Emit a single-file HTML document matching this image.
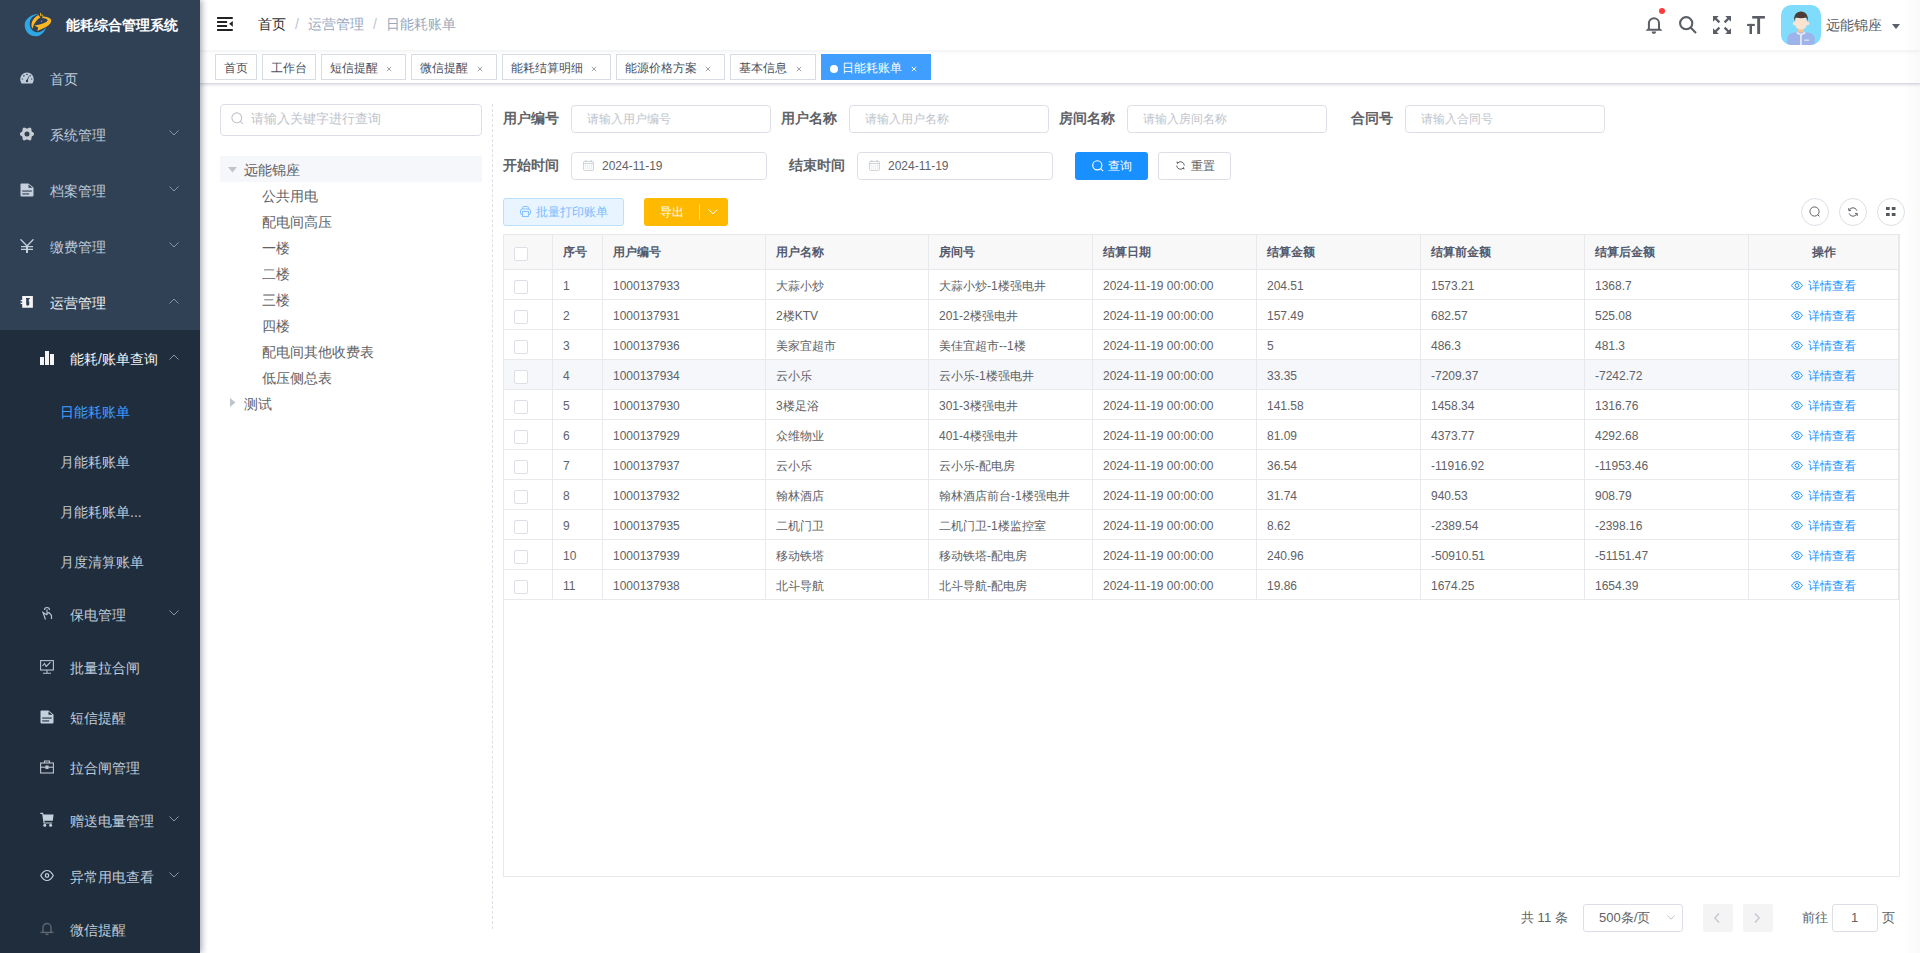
<!DOCTYPE html>
<html><head><meta charset="utf-8">
<style>
*{box-sizing:border-box;margin:0;padding:0}
html,body{width:1920px;height:953px;overflow:hidden}
body{font-family:"Liberation Sans",sans-serif;background:#fff;position:relative;color:#606266;font-size:14px}
.a{position:absolute;white-space:nowrap}
/* sidebar */
#side{left:0;top:0;width:200px;height:953px;background:#1f2d3d;z-index:5;box-shadow:2px 0 6px rgba(0,21,41,.35)}
#side .top{left:0;top:0;width:200px;height:330px;background:#304156}
.mi{color:#bfcbd9;font-size:14px;line-height:20px}
.ic{position:absolute}
.chev{position:absolute;width:7px;height:7px;border-right:1px solid #909399;border-bottom:1px solid #909399}
.chev.dn{transform:rotate(45deg)}
.chev.up{transform:rotate(-135deg)}
/* header */
#nav{left:200px;top:0;width:1720px;height:50px;background:#fff;box-shadow:0 1px 4px rgba(0,21,41,.08);z-index:3}
#tags{left:200px;top:50px;width:1720px;height:34px;background:#fff;border-bottom:1px solid #d8dce5;box-shadow:0 1px 3px 0 rgba(0,0,0,.12),0 0 3px 0 rgba(0,0,0,.04);z-index:2}
.tag{position:absolute;top:4px;height:26px;line-height:26px;border:1px solid #d8dce5;color:#495060;background:#fff;font-size:12px;padding-left:8px}
.tag .x{position:absolute;font-size:11px;color:#495060}
.tag.act{background:#409eff;border-color:#409eff;color:#fff}
/* inputs */
.inp{position:absolute;border:1px solid #dcdfe6;border-radius:4px;background:#fff}
.ph{position:absolute;color:#c0c4cc;font-size:12px;white-space:nowrap}
.lbl{position:absolute;font-weight:bold;color:#606266;font-size:14px;white-space:nowrap}
/* table */
.tb{position:absolute;left:503px;top:234px;width:1397px;height:643px;border:1px solid #e8e9ec;background:#fff}
.th{position:absolute;left:0;top:0;width:1395px;height:35px;background:#f8f8f9;border-bottom:1px solid #e8e9ec}
.vl{position:absolute;top:0;width:1px;height:365px;background:#e8e9ec}
.hl{position:absolute;left:0;width:1394px;height:1px;background:#e8e9ec}
.ht{position:absolute;top:0;line-height:35px;font-size:12px;font-weight:bold;color:#515a6e;white-space:nowrap}
.td{position:absolute;font-size:12px;color:#606266;white-space:nowrap;line-height:33px}
.cb{position:absolute;width:14px;height:14px;border:1px solid #dcdfe6;border-radius:2px;background:#fff}
.lk{color:#1890ff}
.circ{position:absolute;width:28px;height:28px;border:1px solid #dcdfe6;border-radius:50%;background:#fff}
.tr{font-size:14px;color:#606266;line-height:20px}
.dt{font-size:12px;color:#606266;line-height:18px}
.pg{font-size:13px;color:#606266;line-height:20px}
</style></head>
<body>

<!-- SIDEBAR -->
<div id="side" class="a">
  <div class="a top"></div>
  <!-- logo -->
  <svg class="ic" style="left:20px;top:8px" width="36" height="32" viewBox="0 0 36 32">
    <path d="M18.1 6 C11 6.5 4.7 11 4.7 17 C4.7 24 10 28.5 16.5 28.2 C21 28 24.5 24 26.2 19.5 C23 23 20 24.5 16.8 24.2 C12.5 23.8 9.5 20 9.7 15 C10 10.5 13.5 7.5 17.8 6.4 Z" fill="#2ea7e4"/>
    <path d="M12.4 20.8 C10 16 12.5 10 18.5 7 L20.3 9.5 C16.5 11.5 14 15.5 12.4 20.8 Z" fill="#fbb726"/>
    <path d="M22.5 8.5 C26 8.5 31 9.5 31.2 12.5 C31.3 15.5 28 18 25 19.5 L17.3 23 L18.2 19.5 L14.3 17.4 C18 17.3 23 16 26.5 13.8 C28 12.8 28 11.5 26 10.8 C24.5 10.3 23 10.2 22.3 10 Z" fill="#fbb726"/>
    <path d="M20 5.2 L21 4.8 L21.6 7.8 L20.3 8.2Z M22.2 6.8 L23 6.5 L23.4 8.6 L22.4 8.8Z" fill="#fbb726"/>
    <circle cx="21.5" cy="13.1" r="0.6" fill="#fbb726"/>
  </svg>
  <div class="a" style="left:66px;top:15px;color:#fff;font-weight:bold;font-size:14px;line-height:20px">能耗综合管理系统</div>

  <!-- 首页 -->
  <svg class="ic" style="left:20px;top:72px" width="14" height="12" viewBox="0 0 14 12"><path d="M7 0.5C3.2 0.5 0.3 3.5 0.3 7.3C0.3 8.9 0.8 10.3 1.6 11.5H12.4C13.2 10.3 13.7 8.9 13.7 7.3C13.7 3.5 10.8 0.5 7 0.5Z" fill="#bfcbd9"/><g fill="#304156"><rect x="6.2" y="1.8" width="1.6" height="1.2" rx=".5"/><rect x="3.2" y="3" width="1.4" height="1.5" rx=".5"/><rect x="9.4" y="3" width="1.4" height="1.5" rx=".5"/><rect x="1.6" y="6.5" width="1.6" height="1.1" rx=".5"/><rect x="10.8" y="6.5" width="1.6" height="1.1" rx=".5"/><circle cx="7" cy="9" r="1.2"/><path d="M6.5 8.8L8.6 4.2L9.1 4.4L7.5 9.2Z"/></g></svg>
  <div class="a mi" style="left:50px;top:69px">首页</div>

  <!-- 系统管理 -->
  <svg class="ic" style="left:20px;top:127px" width="14" height="14" viewBox="0 0 14 14"><path d="M14.15 7.00L14.01 7.61L13.62 8.17L13.09 8.63L12.52 9.01L12.04 9.35L11.72 9.72L11.56 10.19L11.50 10.78L11.45 11.45L11.32 12.15L11.04 12.76L10.58 13.19L9.97 13.38L9.30 13.32L8.63 13.09L8.02 12.79L7.48 12.54L7.00 12.45L6.52 12.54L5.98 12.79L5.37 13.09L4.70 13.32L4.03 13.38L3.43 13.19L2.96 12.76L2.68 12.15L2.55 11.45L2.50 10.78L2.44 10.19L2.28 9.73L1.96 9.35L1.48 9.01L0.91 8.63L0.38 8.17L-0.01 7.61L-0.15 7.00L-0.01 6.39L0.38 5.83L0.91 5.37L1.48 4.99L1.96 4.65L2.28 4.27L2.44 3.81L2.50 3.22L2.55 2.55L2.68 1.85L2.96 1.24L3.42 0.81L4.03 0.62L4.70 0.68L5.37 0.91L5.98 1.21L6.52 1.46L7.00 1.55L7.48 1.46L8.02 1.21L8.63 0.91L9.30 0.68L9.97 0.62L10.57 0.81L11.04 1.24L11.32 1.85L11.45 2.55L11.50 3.22L11.56 3.81L11.72 4.28L12.04 4.65L12.52 4.99L13.09 5.37L13.62 5.83L14.01 6.39Z M7 4.5A2.5 2.5 0 1 0 7 9.5A2.5 2.5 0 1 0 7 4.5Z" fill="#c7ccd3" fill-rule="evenodd"/></svg>
  <div class="a mi" style="left:50px;top:125px">系统管理</div>
  <svg class="ic" style="left:169px;top:130px" width="10" height="6" viewBox="0 0 10 6" fill="none" stroke="#8a94a3" stroke-width="1"><path d="M0.5 0.5L5 5L9.5 0.5"/></svg>

  <!-- 档案管理 -->
  <svg class="ic" style="left:20px;top:183px" width="14" height="14" viewBox="0 0 14 14"><path d="M1.5 0.5H8.5L13.5 4.5V12.5Q13.5 13.5 12.5 13.5H1.5Q0.5 13.5 0.5 12.5V1.5Q0.5 0.5 1.5 0.5Z" fill="#c5d0dd"/><path d="M8.5 1.5L12.5 4.8H8.5Z" fill="#304156"/><rect x="2.2" y="7.5" width="9.6" height="1.1" fill="#304156"/><rect x="2.2" y="10.4" width="7" height="1.1" fill="#304156"/></svg>
  <div class="a mi" style="left:50px;top:181px">档案管理</div>
  <svg class="ic" style="left:169px;top:186px" width="10" height="6" viewBox="0 0 10 6" fill="none" stroke="#8a94a3" stroke-width="1"><path d="M0.5 0.5L5 5L9.5 0.5"/></svg>

  <!-- 缴费管理 -->
  <svg class="ic" style="left:20px;top:239px" width="14" height="14" viewBox="0 0 14 14" fill="none" stroke="#c5d0dd" stroke-width="1.3"><path d="M0.5 0.3L7 7L13.5 0.3"/><path d="M7 7V14" stroke-width="2"/><path d="M1 7.6H13M1 10.4H13"/></svg>
  <div class="a mi" style="left:50px;top:237px">缴费管理</div>
  <svg class="ic" style="left:169px;top:242px" width="10" height="6" viewBox="0 0 10 6" fill="none" stroke="#8a94a3" stroke-width="1"><path d="M0.5 0.5L5 5L9.5 0.5"/></svg>

  <!-- 运营管理 -->
  <svg class="ic" style="left:20px;top:296px" width="13" height="12" viewBox="0 0 13 12"><path d="M2.2 0H12.9V11.8H2.2V8.1H0.2L1 7.45L0.2 6.8H2.2V5.3H0.2L1 4.65L0.2 4H2.2Z" fill="#f4f4f5"/><path d="M6 2H9.8V3L8.8 3.4V5.2L9.6 6.2L8.8 6.9L9.5 7.8C9.3 9 8.5 9.7 7.6 9.7C6.8 9.7 6.2 9 6.2 8V3.4L6 3Z" fill="#304156"/></svg>
  <div class="a mi" style="left:50px;top:293px;color:#f4f4f5">运营管理</div>
  <svg class="ic" style="left:169px;top:298px" width="10" height="6" viewBox="0 0 10 6" fill="none" stroke="#8a94a3" stroke-width="1"><path d="M0.5 5.5L5 1L9.5 5.5"/></svg>

  <!-- 能耗/账单查询 -->
  <svg class="ic" style="left:40px;top:351px" width="14" height="14" viewBox="0 0 14 14"><rect x="0" y="6" width="4" height="8" fill="#f4f4f5"/><rect x="5" y="0" width="4" height="14" fill="#f4f4f5"/><rect x="10" y="3" width="4" height="11" fill="#f4f4f5"/></svg>
  <div class="a mi" style="left:70px;top:349px;color:#f4f4f5">能耗/账单查询</div>
  <svg class="ic" style="left:169px;top:354px" width="10" height="6" viewBox="0 0 10 6" fill="none" stroke="#8a94a3" stroke-width="1"><path d="M0.5 5.5L5 1L9.5 5.5"/></svg>

  <div class="a mi" style="left:60px;top:402px;color:#409eff">日能耗账单</div>
  <div class="a mi" style="left:60px;top:452px">月能耗账单</div>
  <div class="a mi" style="left:60px;top:502px">月能耗账单...</div>
  <div class="a mi" style="left:60px;top:552px">月度清算账单</div>

  <!-- 保电管理 -->
  <svg class="ic" style="left:41px;top:606px" width="12" height="15" viewBox="0 0 12 15" fill="none" stroke="#b8c2cf" stroke-width="1.2"><path d="M3.5 4A2.5 2.5 0 0 1 8.5 4"/><path d="M6 3.5V9"/><path d="M6 7.5L8 6.5L10.5 9.5V13"/><path d="M6 9L2 6.5L4.5 13.5"/></svg>
  <div class="a mi" style="left:70px;top:605px">保电管理</div>
  <svg class="ic" style="left:169px;top:610px" width="10" height="6" viewBox="0 0 10 6" fill="none" stroke="#8a94a3" stroke-width="1"><path d="M0.5 0.5L5 5L9.5 0.5"/></svg>

  <!-- 批量拉合闸 -->
  <svg class="ic" style="left:40px;top:660px" width="14" height="14" viewBox="0 0 14 14" fill="none" stroke="#b8c2cf" stroke-width="1.1"><rect x="0.6" y="0.6" width="12.8" height="9.4"/><path d="M2.5 6L4.5 3.5L6.2 6.5L10.5 2.2"/><path d="M7 10V13M3 13.2H11"/></svg>
  <div class="a mi" style="left:70px;top:658px">批量拉合闸</div>

  <!-- 短信提醒 -->
  <svg class="ic" style="left:40px;top:710px" width="14" height="14" viewBox="0 0 14 14"><path d="M1.5 0.5H8.5L13.5 4.5V12.5Q13.5 13.5 12.5 13.5H1.5Q0.5 13.5 0.5 12.5V1.5Q0.5 0.5 1.5 0.5Z" fill="#c5d0dd"/><path d="M8.5 1.5L12.5 4.8H8.5Z" fill="#1f2d3d"/><rect x="2.2" y="7.5" width="9.6" height="1.1" fill="#1f2d3d"/><rect x="2.2" y="10.4" width="7" height="1.1" fill="#1f2d3d"/></svg>
  <div class="a mi" style="left:70px;top:708px">短信提醒</div>

  <!-- 拉合闸管理 -->
  <svg class="ic" style="left:40px;top:760px" width="14" height="14" viewBox="0 0 14 14" fill="none" stroke="#c0c4cc" stroke-width="1.1"><rect x="0.6" y="3" width="12.8" height="10"/><path d="M4.5 3V1H9.5V3"/><path d="M0.6 7.2H13.4"/><rect x="6" y="6" width="2" height="2.5" fill="#c0c4cc"/></svg>
  <div class="a mi" style="left:70px;top:758px">拉合闸管理</div>

  <!-- 赠送电量管理 -->
  <svg class="ic" style="left:40px;top:812px" width="14" height="15" viewBox="0 0 14 15"><path d="M0.3 0.8H3L3.6 2.6H13.6L12.8 8.8H4.4L4.6 10.4H12.2V11.5H3.6L2.2 2H0.3Z" fill="#c5d0dd"/><circle cx="4.8" cy="13.2" r="1.5" fill="#c5d0dd"/><circle cx="10.6" cy="13.2" r="1.5" fill="#c5d0dd"/></svg>
  <div class="a mi" style="left:70px;top:811px">赠送电量管理</div>
  <svg class="ic" style="left:169px;top:816px" width="10" height="6" viewBox="0 0 10 6" fill="none" stroke="#8a94a3" stroke-width="1"><path d="M0.5 0.5L5 5L9.5 0.5"/></svg>

  <!-- 异常用电查看 -->
  <svg class="ic" style="left:40px;top:869px" width="14" height="13" viewBox="0 0 14 13" fill="none" stroke="#c5d0dd" stroke-width="1.2"><path d="M0.7 6.5C2.5 3.2 4.5 1.5 7 1.5C9.5 1.5 11.5 3.2 13.3 6.5C11.5 9.8 9.5 11.5 7 11.5C4.5 11.5 2.5 9.8 0.7 6.5Z"/><rect x="5.4" y="4.9" width="3.2" height="3.2" rx="1"/></svg>
  <div class="a mi" style="left:70px;top:867px">异常用电查看</div>
  <svg class="ic" style="left:169px;top:872px" width="10" height="6" viewBox="0 0 10 6" fill="none" stroke="#8a94a3" stroke-width="1"><path d="M0.5 0.5L5 5L9.5 0.5"/></svg>

  <!-- 微信提醒 -->
  <svg class="ic" style="left:40px;top:922px" width="14" height="14" viewBox="0 0 14 14" fill="none" stroke="#5f6670" stroke-width="1.4"><path d="M3 10V5.5A4 4 0 0 1 11 5.5V10"/><path d="M0.5 10.4H13.5"/><path d="M5.5 12.3H8.5" stroke-width="1.6"/></svg>
  <div class="a mi" style="left:70px;top:920px">微信提醒</div>
</div>

<!-- NAVBAR -->
<div id="nav" class="a">
  <svg class="ic" style="left:17px;top:17px" width="16" height="14" viewBox="0 0 16 14" fill="#222"><rect x="0" y="0" width="15.8" height="1.9" rx=".5"/><rect x="0" y="4" width="10.1" height="1.9" rx=".5"/><rect x="0" y="8.1" width="10.1" height="1.8" rx=".5"/><rect x="0" y="12" width="15.8" height="1.9" rx=".5"/><path d="M15.8 3.9V9.8L12.1 6.85Z"/></svg>
  <div class="a" style="left:58px;top:14px;font-size:14px;line-height:20px;color:#303133">首页</div>
  <div class="a" style="left:95px;top:14px;font-size:14px;line-height:20px;color:#c0c4cc">/</div>
  <div class="a" style="left:108px;top:14px;font-size:14px;line-height:20px;color:#97a8be">运营管理</div>
  <div class="a" style="left:173px;top:14px;font-size:14px;line-height:20px;color:#c0c4cc">/</div>
  <div class="a" style="left:186px;top:14px;font-size:14px;line-height:20px;color:#97a8be">日能耗账单</div>

  <!-- bell -->
  <svg class="ic" style="left:1445px;top:16px" width="18" height="19" viewBox="0 0 18 19"><path d="M3.9 13V7.2A5.05 5.05 0 0 1 14 7.2V13" fill="none" stroke="#5a5e66" stroke-width="2"/><path d="M2.4 12.7H15.6L17.4 14.7H0.6Z" fill="#5a5e66"/><path d="M6.6 15.6H11.2A2.3 2.3 0 0 1 6.6 15.6Z" fill="#5a5e66"/></svg>
  <div class="a" style="left:1459px;top:8px;width:6px;height:6px;border-radius:50%;background:#ff3b3b"></div>
  <!-- search -->
  <svg class="ic" style="left:1479px;top:16px" width="18" height="18" viewBox="0 0 18 18" fill="none" stroke="#5a5e66" stroke-width="2.1"><circle cx="7.2" cy="7.2" r="6.1"/><path d="M11.6 11.6L17 17"/></svg>
  <!-- fullscreen -->
  <svg class="ic" style="left:1513px;top:16px" width="18" height="18" viewBox="0 0 18 18" fill="#5a5e66" stroke="#5a5e66"><path d="M0 0H5.8L0 5.8Z M18 0V5.8L12.2 0Z M0 18V12.2L5.8 18Z M18 18H12.2L18 12.2Z" stroke="none"/><path d="M2 2L6.4 6.4M16 2L11.6 6.4M2 16L6.4 11.6M16 16L11.6 11.6" stroke-width="2.3" fill="none"/></svg>
  <!-- size -->
  <svg class="ic" style="left:1547px;top:16px" width="18" height="18" viewBox="0 0 18 18" fill="#5a5e66"><rect x="5.2" y="0" width="12.7" height="2.6"/><rect x="10.2" y="0" width="2.9" height="18"/><rect x="0.1" y="7.9" width="7.7" height="2.1"/><rect x="2.5" y="7.9" width="2.5" height="10.1"/></svg>
  <!-- avatar -->
  <div class="a" style="left:1581px;top:5px;width:40px;height:40px;border-radius:10px;background:#7fdcfc;overflow:hidden">
    <svg width="40" height="40" viewBox="0 0 40 40"><path d="M6.3 40V33.5C6.3 30.5 8.5 28.6 12 27.8L17 26.8H23L28 27.8C31.5 28.6 33.7 30.5 33.7 33.5V40Z" fill="#9db4ea"/><rect x="17" y="22.5" width="6" height="5" fill="#f5c29c"/><path d="M15.8 26.8L20 28.8L24.2 26.8L24.6 28.6L20 30.4L15.4 28.6Z" fill="#e3e9f7"/><rect x="19" y="28.8" width="1.8" height="11.2" fill="#e3e9f7"/><rect x="23.2" y="34.6" width="4.9" height="1.2" fill="#e3e9f7"/><ellipse cx="13.2" cy="18.4" rx="1.4" ry="1.9" fill="#fbe3d2"/><ellipse cx="26.8" cy="18.4" rx="1.4" ry="1.9" fill="#fbe3d2"/><ellipse cx="20" cy="18" rx="6.2" ry="6.6" fill="#fbe3d2"/><path d="M13.1 16.5C12.6 10 15.5 6.6 20 6.6C24.5 6.6 27.4 10 26.9 16.5C26.5 14.5 25.9 13.2 24.8 12.6C22 13.3 18 13.3 15.2 12.6C14.1 13.2 13.5 14.5 13.1 16.5Z" fill="#4a3c36"/></svg>
  </div>
  <div class="a" style="left:1626px;top:15px;font-size:14px;line-height:20px;color:#5a5e66">远能锦座</div>
  <svg class="ic" style="left:1692px;top:24px" width="8" height="5" viewBox="0 0 8 5"><path d="M0 0H8L4 5Z" fill="#5a5e66"/></svg>
</div>

<!-- TAGS -->
<div id="tags" class="a">
  <div class="tag" style="left:15px;width:42px">首页</div>
  <div class="tag" style="left:62px;width:54px">工作台</div>
  <div class="tag" style="left:121px;width:85px">短信提醒<svg class="ic" style="left:64px;top:11px" width="6" height="6" viewBox="0 0 6 6" fill="none" stroke="#9da1a8" stroke-width="1"><path d="M0.8 0.8L5.2 5.2M5.2 0.8L0.8 5.2"/></svg></div>
  <div class="tag" style="left:211px;width:86px">微信提醒<svg class="ic" style="left:65px;top:11px" width="6" height="6" viewBox="0 0 6 6" fill="none" stroke="#9da1a8" stroke-width="1"><path d="M0.8 0.8L5.2 5.2M5.2 0.8L0.8 5.2"/></svg></div>
  <div class="tag" style="left:302px;width:109px">能耗结算明细<svg class="ic" style="left:88px;top:11px" width="6" height="6" viewBox="0 0 6 6" fill="none" stroke="#9da1a8" stroke-width="1"><path d="M0.8 0.8L5.2 5.2M5.2 0.8L0.8 5.2"/></svg></div>
  <div class="tag" style="left:416px;width:109px">能源价格方案<svg class="ic" style="left:88px;top:11px" width="6" height="6" viewBox="0 0 6 6" fill="none" stroke="#9da1a8" stroke-width="1"><path d="M0.8 0.8L5.2 5.2M5.2 0.8L0.8 5.2"/></svg></div>
  <div class="tag" style="left:530px;width:86px">基本信息<svg class="ic" style="left:65px;top:11px" width="6" height="6" viewBox="0 0 6 6" fill="none" stroke="#9da1a8" stroke-width="1"><path d="M0.8 0.8L5.2 5.2M5.2 0.8L0.8 5.2"/></svg></div>
  <div class="tag act" style="left:621px;width:110px"><span style="display:inline-block;width:8px;height:8px;border-radius:50%;background:#fff;margin-right:4px;vertical-align:-1px"></span>日能耗账单<svg class="ic" style="left:89px;top:11px" width="6" height="6" viewBox="0 0 6 6" fill="none" stroke="#fff" stroke-width="1"><path d="M0.8 0.8L5.2 5.2M5.2 0.8L0.8 5.2"/></svg></div>
</div>

<!-- CONTENT -->
<div id="content">
<!-- tree search -->
<div class="inp" style="left:220px;top:104px;width:262px;height:32px"></div>
<svg class="ic" style="left:231px;top:112px" width="13" height="13" viewBox="0 0 13 13" fill="none" stroke="#c0c4cc" stroke-width="1.1"><circle cx="5.8" cy="5.8" r="4.9"/><path d="M9.3 9.3L11.8 11.8"/></svg>
<div class="ph" style="left:251px;top:110px;font-size:13px;line-height:18px">请输入关键字进行查询</div>
<!-- tree -->
<div class="a" style="left:220px;top:156px;width:262px;height:26px;background:#f5f7fa"></div>
<svg class="ic" style="left:228px;top:167px" width="9" height="6" viewBox="0 0 9 6"><path d="M0 0H9L4.5 5.5Z" fill="#c0c4cc"/></svg>
<div class="a tr" style="left:244px;top:160px">远能锦座</div>
<div class="a tr" style="left:262px;top:186px">公共用电</div>
<div class="a tr" style="left:262px;top:212px">配电间高压</div>
<div class="a tr" style="left:262px;top:238px">一楼</div>
<div class="a tr" style="left:262px;top:264px">二楼</div>
<div class="a tr" style="left:262px;top:290px">三楼</div>
<div class="a tr" style="left:262px;top:316px">四楼</div>
<div class="a tr" style="left:262px;top:342px">配电间其他收费表</div>
<div class="a tr" style="left:262px;top:368px">低压侧总表</div>
<svg class="ic" style="left:230px;top:398px" width="6" height="9" viewBox="0 0 6 9"><path d="M0 0V9L5.5 4.5Z" fill="#c0c4cc"/></svg>
<div class="a tr" style="left:244px;top:394px">测试</div>
<!-- dashed divider -->
<div class="a" style="left:492px;top:104px;width:0;height:825px;border-left:1px dashed #dcdfe6"></div>

<!-- form row 1 -->
<div class="lbl" style="left:503px;top:110px">用户编号</div>
<div class="inp" style="left:571px;top:105px;width:200px;height:28px"></div>
<div class="ph" style="left:587px;top:111px">请输入用户编号</div>
<div class="lbl" style="left:781px;top:110px">用户名称</div>
<div class="inp" style="left:849px;top:105px;width:200px;height:28px"></div>
<div class="ph" style="left:865px;top:111px">请输入用户名称</div>
<div class="lbl" style="left:1059px;top:110px">房间名称</div>
<div class="inp" style="left:1127px;top:105px;width:200px;height:28px"></div>
<div class="ph" style="left:1143px;top:111px">请输入房间名称</div>
<div class="lbl" style="left:1351px;top:110px">合同号</div>
<div class="inp" style="left:1405px;top:105px;width:200px;height:28px"></div>
<div class="ph" style="left:1421px;top:111px">请输入合同号</div>

<!-- form row 2 -->
<div class="lbl" style="left:503px;top:157px">开始时间</div>
<div class="inp" style="left:571px;top:152px;width:196px;height:28px"></div>
<svg class="ic" style="left:583px;top:160px" width="11" height="11" viewBox="0 0 11 11"><g fill="none" stroke="#c0c4cc" stroke-width="0.8"><rect x="0.6" y="1.4" width="9.8" height="9" rx="0.8"/><path d="M0.6 3.6H10.4M2.8 0V2.2M8.2 0V2.2"/></g><g fill="#d5d8de"><rect x="2.3" y="5.4" width="1" height="1"/><rect x="4.2" y="5.4" width="1" height="1"/><rect x="6.1" y="5.4" width="1" height="1"/><rect x="8.0" y="5.4" width="1" height="1"/><rect x="2.3" y="7.6" width="1" height="1"/><rect x="4.2" y="7.6" width="1" height="1"/><rect x="6.1" y="7.6" width="1" height="1"/><rect x="8.0" y="7.6" width="1" height="1"/></g></svg>
<div class="a dt" style="left:602px;top:157px">2024-11-19</div>
<div class="lbl" style="left:789px;top:157px">结束时间</div>
<div class="inp" style="left:857px;top:152px;width:196px;height:28px"></div>
<svg class="ic" style="left:869px;top:160px" width="11" height="11" viewBox="0 0 11 11"><g fill="none" stroke="#c0c4cc" stroke-width="0.8"><rect x="0.6" y="1.4" width="9.8" height="9" rx="0.8"/><path d="M0.6 3.6H10.4M2.8 0V2.2M8.2 0V2.2"/></g><g fill="#d5d8de"><rect x="2.3" y="5.4" width="1" height="1"/><rect x="4.2" y="5.4" width="1" height="1"/><rect x="6.1" y="5.4" width="1" height="1"/><rect x="8.0" y="5.4" width="1" height="1"/><rect x="2.3" y="7.6" width="1" height="1"/><rect x="4.2" y="7.6" width="1" height="1"/><rect x="6.1" y="7.6" width="1" height="1"/><rect x="8.0" y="7.6" width="1" height="1"/></g></svg>
<div class="a dt" style="left:888px;top:157px">2024-11-19</div>
<!-- query -->
<div class="a" style="left:1075px;top:152px;width:73px;height:28px;background:#1890ff;border-radius:3px"></div>
<svg class="ic" style="left:1092px;top:160px" width="12" height="12" viewBox="0 0 12 12" fill="none" stroke="#fff" stroke-width="1.1"><circle cx="5.3" cy="5.3" r="4.6"/><path d="M8.6 8.6L11.2 11.2"/></svg>
<div class="a" style="left:1108px;top:157px;color:#fff;font-size:12px;line-height:18px">查询</div>
<!-- reset -->
<div class="inp" style="left:1158px;top:152px;width:73px;height:28px;border-radius:3px"></div>
<svg class="ic" style="left:1176px;top:161px" width="9" height="9" viewBox="0 0 9 9" fill="none" stroke="#606266" stroke-width="1"><path d="M8.3 4.5A3.8 3.8 0 0 0 2 1.7"/><path d="M0.7 4.5A3.8 3.8 0 0 0 7 7.3"/><path d="M0.4 0.6L3 1.2L1.2 3.2Z" fill="#606266" stroke="none"/><path d="M8.6 8.4L6 7.8L7.8 5.8Z" fill="#606266" stroke="none"/></svg>
<div class="a" style="left:1191px;top:157px;color:#606266;font-size:12px;line-height:18px">重置</div>

<!-- row 3 -->
<div class="a" style="left:503px;top:198px;width:121px;height:28px;background:#e8f4ff;border:1px solid #bae0ff;border-radius:3px"></div>
<svg class="ic" style="left:520px;top:206px" width="11" height="11" viewBox="0 0 11 11" fill="none" stroke="#79bbff" stroke-width="0.9"><path d="M2.6 3V1.5Q2.6 0.5 3.6 0.5H7.4Q8.4 0.5 8.4 1.5V3"/><path d="M2.4 8.5H1.8Q0.5 8.5 0.5 7V5Q0.5 3 2.5 3H8.5Q10.5 3 10.5 5V7Q10.5 8.5 9.2 8.5H8.6"/><rect x="2.6" y="5.5" width="5.8" height="5"/></svg>
<div class="a" style="left:536px;top:203px;color:#79bbff;font-size:12px;line-height:18px">批量打印账单</div>
<div class="a" style="left:644px;top:198px;width:84px;height:28px;background:#ffba00;border-radius:3px"></div>
<div class="a" style="left:699px;top:204px;width:1px;height:16px;background:rgba(255,255,255,.5)"></div>
<div class="a" style="left:660px;top:203px;color:#fff;font-size:12px;line-height:18px">导出</div>
<svg class="ic" style="left:708px;top:209px" width="10" height="6" viewBox="0 0 10 6" fill="none" stroke="#fff" stroke-width="1"><path d="M0.5 0.5L5 4.8L9.5 0.5"/></svg>
<!-- right toolbar -->
<div class="circ" style="left:1801px;top:198px"></div>
<svg class="ic" style="left:1809px;top:206px" width="12" height="12" viewBox="0 0 12 12" fill="none" stroke="#606266" stroke-width="1"><circle cx="5.5" cy="5.5" r="4.6"/><path d="M8.7 8.7L10.4 10.4"/></svg>
<div class="circ" style="left:1839px;top:198px"></div>
<svg class="ic" style="left:1848px;top:207px" width="10" height="10" viewBox="0 0 10 10" fill="none" stroke="#606266" stroke-width="1"><path d="M8.8 3.6A4 4 0 0 0 1.2 3.4"/><path d="M1.2 6.4A4 4 0 0 0 8.8 6.6"/><path d="M0.8 1V3.6H3" /><path d="M9.2 9V6.4H7"/></svg>
<div class="circ" style="left:1877px;top:198px"></div>
<svg class="ic" style="left:1886px;top:207px" width="10" height="9" viewBox="0 0 10 9" fill="#55585e"><rect x="0" y="0" width="3.7" height="3"/><rect x="5.8" y="0" width="3.7" height="3"/><rect x="0" y="6" width="3.7" height="3"/><rect x="5.8" y="6" width="3.7" height="3"/></svg>
<div class="tb">
<div class="th"></div>
<div class="a" style="left:0;top:125px;width:1395px;height:30px;background:#f5f7fa"></div>
<div class="vl" style="left:48px"></div>
<div class="vl" style="left:98px"></div>
<div class="vl" style="left:261px"></div>
<div class="vl" style="left:424px"></div>
<div class="vl" style="left:588px"></div>
<div class="vl" style="left:752px"></div>
<div class="vl" style="left:916px"></div>
<div class="vl" style="left:1080px"></div>
<div class="vl" style="left:1244px"></div>
<div class="vl" style="left:1394px"></div>
<div class="hl" style="top:64px"></div>
<div class="hl" style="top:94px"></div>
<div class="hl" style="top:124px"></div>
<div class="hl" style="top:154px"></div>
<div class="hl" style="top:184px"></div>
<div class="hl" style="top:214px"></div>
<div class="hl" style="top:244px"></div>
<div class="hl" style="top:274px"></div>
<div class="hl" style="top:304px"></div>
<div class="hl" style="top:334px"></div>
<div class="hl" style="top:364px"></div>
<div class="ht" style="left:59px">序号</div>
<div class="ht" style="left:109px">用户编号</div>
<div class="ht" style="left:272px">用户名称</div>
<div class="ht" style="left:435px">房间号</div>
<div class="ht" style="left:599px">结算日期</div>
<div class="ht" style="left:763px">结算金额</div>
<div class="ht" style="left:927px">结算前金额</div>
<div class="ht" style="left:1091px">结算后金额</div>
<div class="ht" style="left:1245px;width:150px;text-align:center">操作</div>
<div class="cb" style="left:10px;top:12px"></div>
<div class="cb" style="left:10px;top:45px"></div>
<div class="td" style="left:59px;top:35px">1</div>
<div class="td" style="left:109px;top:35px">1000137933</div>
<div class="td" style="left:272px;top:35px">大蒜小炒</div>
<div class="td" style="left:435px;top:35px">大蒜小炒-1楼强电井</div>
<div class="td" style="left:599px;top:35px">2024-11-19 00:00:00</div>
<div class="td" style="left:763px;top:35px">204.51</div>
<div class="td" style="left:927px;top:35px">1573.21</div>
<div class="td" style="left:1091px;top:35px">1368.7</div>
<div class="td lk" style="left:1287px;top:35px"><svg width="12" height="9" viewBox="0 0 12 9" fill="none" stroke="#1890ff" stroke-width="1" style="vertical-align:0px;margin-right:5px"><path d="M0.6 4.5C2 2 3.8 0.7 6 0.7C8.2 0.7 10 2 11.4 4.5C10 7 8.2 8.3 6 8.3C3.8 8.3 2 7 0.6 4.5Z"/><circle cx="6" cy="4.5" r="1.9"/></svg>详情查看</div>
<div class="cb" style="left:10px;top:75px"></div>
<div class="td" style="left:59px;top:65px">2</div>
<div class="td" style="left:109px;top:65px">1000137931</div>
<div class="td" style="left:272px;top:65px">2楼KTV</div>
<div class="td" style="left:435px;top:65px">201-2楼强电井</div>
<div class="td" style="left:599px;top:65px">2024-11-19 00:00:00</div>
<div class="td" style="left:763px;top:65px">157.49</div>
<div class="td" style="left:927px;top:65px">682.57</div>
<div class="td" style="left:1091px;top:65px">525.08</div>
<div class="td lk" style="left:1287px;top:65px"><svg width="12" height="9" viewBox="0 0 12 9" fill="none" stroke="#1890ff" stroke-width="1" style="vertical-align:0px;margin-right:5px"><path d="M0.6 4.5C2 2 3.8 0.7 6 0.7C8.2 0.7 10 2 11.4 4.5C10 7 8.2 8.3 6 8.3C3.8 8.3 2 7 0.6 4.5Z"/><circle cx="6" cy="4.5" r="1.9"/></svg>详情查看</div>
<div class="cb" style="left:10px;top:105px"></div>
<div class="td" style="left:59px;top:95px">3</div>
<div class="td" style="left:109px;top:95px">1000137936</div>
<div class="td" style="left:272px;top:95px">美家宜超市</div>
<div class="td" style="left:435px;top:95px">美佳宜超市--1楼</div>
<div class="td" style="left:599px;top:95px">2024-11-19 00:00:00</div>
<div class="td" style="left:763px;top:95px">5</div>
<div class="td" style="left:927px;top:95px">486.3</div>
<div class="td" style="left:1091px;top:95px">481.3</div>
<div class="td lk" style="left:1287px;top:95px"><svg width="12" height="9" viewBox="0 0 12 9" fill="none" stroke="#1890ff" stroke-width="1" style="vertical-align:0px;margin-right:5px"><path d="M0.6 4.5C2 2 3.8 0.7 6 0.7C8.2 0.7 10 2 11.4 4.5C10 7 8.2 8.3 6 8.3C3.8 8.3 2 7 0.6 4.5Z"/><circle cx="6" cy="4.5" r="1.9"/></svg>详情查看</div>
<div class="cb" style="left:10px;top:135px"></div>
<div class="td" style="left:59px;top:125px">4</div>
<div class="td" style="left:109px;top:125px">1000137934</div>
<div class="td" style="left:272px;top:125px">云小乐</div>
<div class="td" style="left:435px;top:125px">云小乐-1楼强电井</div>
<div class="td" style="left:599px;top:125px">2024-11-19 00:00:00</div>
<div class="td" style="left:763px;top:125px">33.35</div>
<div class="td" style="left:927px;top:125px">-7209.37</div>
<div class="td" style="left:1091px;top:125px">-7242.72</div>
<div class="td lk" style="left:1287px;top:125px"><svg width="12" height="9" viewBox="0 0 12 9" fill="none" stroke="#1890ff" stroke-width="1" style="vertical-align:0px;margin-right:5px"><path d="M0.6 4.5C2 2 3.8 0.7 6 0.7C8.2 0.7 10 2 11.4 4.5C10 7 8.2 8.3 6 8.3C3.8 8.3 2 7 0.6 4.5Z"/><circle cx="6" cy="4.5" r="1.9"/></svg>详情查看</div>
<div class="cb" style="left:10px;top:165px"></div>
<div class="td" style="left:59px;top:155px">5</div>
<div class="td" style="left:109px;top:155px">1000137930</div>
<div class="td" style="left:272px;top:155px">3楼足浴</div>
<div class="td" style="left:435px;top:155px">301-3楼强电井</div>
<div class="td" style="left:599px;top:155px">2024-11-19 00:00:00</div>
<div class="td" style="left:763px;top:155px">141.58</div>
<div class="td" style="left:927px;top:155px">1458.34</div>
<div class="td" style="left:1091px;top:155px">1316.76</div>
<div class="td lk" style="left:1287px;top:155px"><svg width="12" height="9" viewBox="0 0 12 9" fill="none" stroke="#1890ff" stroke-width="1" style="vertical-align:0px;margin-right:5px"><path d="M0.6 4.5C2 2 3.8 0.7 6 0.7C8.2 0.7 10 2 11.4 4.5C10 7 8.2 8.3 6 8.3C3.8 8.3 2 7 0.6 4.5Z"/><circle cx="6" cy="4.5" r="1.9"/></svg>详情查看</div>
<div class="cb" style="left:10px;top:195px"></div>
<div class="td" style="left:59px;top:185px">6</div>
<div class="td" style="left:109px;top:185px">1000137929</div>
<div class="td" style="left:272px;top:185px">众维物业</div>
<div class="td" style="left:435px;top:185px">401-4楼强电井</div>
<div class="td" style="left:599px;top:185px">2024-11-19 00:00:00</div>
<div class="td" style="left:763px;top:185px">81.09</div>
<div class="td" style="left:927px;top:185px">4373.77</div>
<div class="td" style="left:1091px;top:185px">4292.68</div>
<div class="td lk" style="left:1287px;top:185px"><svg width="12" height="9" viewBox="0 0 12 9" fill="none" stroke="#1890ff" stroke-width="1" style="vertical-align:0px;margin-right:5px"><path d="M0.6 4.5C2 2 3.8 0.7 6 0.7C8.2 0.7 10 2 11.4 4.5C10 7 8.2 8.3 6 8.3C3.8 8.3 2 7 0.6 4.5Z"/><circle cx="6" cy="4.5" r="1.9"/></svg>详情查看</div>
<div class="cb" style="left:10px;top:225px"></div>
<div class="td" style="left:59px;top:215px">7</div>
<div class="td" style="left:109px;top:215px">1000137937</div>
<div class="td" style="left:272px;top:215px">云小乐</div>
<div class="td" style="left:435px;top:215px">云小乐-配电房</div>
<div class="td" style="left:599px;top:215px">2024-11-19 00:00:00</div>
<div class="td" style="left:763px;top:215px">36.54</div>
<div class="td" style="left:927px;top:215px">-11916.92</div>
<div class="td" style="left:1091px;top:215px">-11953.46</div>
<div class="td lk" style="left:1287px;top:215px"><svg width="12" height="9" viewBox="0 0 12 9" fill="none" stroke="#1890ff" stroke-width="1" style="vertical-align:0px;margin-right:5px"><path d="M0.6 4.5C2 2 3.8 0.7 6 0.7C8.2 0.7 10 2 11.4 4.5C10 7 8.2 8.3 6 8.3C3.8 8.3 2 7 0.6 4.5Z"/><circle cx="6" cy="4.5" r="1.9"/></svg>详情查看</div>
<div class="cb" style="left:10px;top:255px"></div>
<div class="td" style="left:59px;top:245px">8</div>
<div class="td" style="left:109px;top:245px">1000137932</div>
<div class="td" style="left:272px;top:245px">翰林酒店</div>
<div class="td" style="left:435px;top:245px">翰林酒店前台-1楼强电井</div>
<div class="td" style="left:599px;top:245px">2024-11-19 00:00:00</div>
<div class="td" style="left:763px;top:245px">31.74</div>
<div class="td" style="left:927px;top:245px">940.53</div>
<div class="td" style="left:1091px;top:245px">908.79</div>
<div class="td lk" style="left:1287px;top:245px"><svg width="12" height="9" viewBox="0 0 12 9" fill="none" stroke="#1890ff" stroke-width="1" style="vertical-align:0px;margin-right:5px"><path d="M0.6 4.5C2 2 3.8 0.7 6 0.7C8.2 0.7 10 2 11.4 4.5C10 7 8.2 8.3 6 8.3C3.8 8.3 2 7 0.6 4.5Z"/><circle cx="6" cy="4.5" r="1.9"/></svg>详情查看</div>
<div class="cb" style="left:10px;top:285px"></div>
<div class="td" style="left:59px;top:275px">9</div>
<div class="td" style="left:109px;top:275px">1000137935</div>
<div class="td" style="left:272px;top:275px">二机门卫</div>
<div class="td" style="left:435px;top:275px">二机门卫-1楼监控室</div>
<div class="td" style="left:599px;top:275px">2024-11-19 00:00:00</div>
<div class="td" style="left:763px;top:275px">8.62</div>
<div class="td" style="left:927px;top:275px">-2389.54</div>
<div class="td" style="left:1091px;top:275px">-2398.16</div>
<div class="td lk" style="left:1287px;top:275px"><svg width="12" height="9" viewBox="0 0 12 9" fill="none" stroke="#1890ff" stroke-width="1" style="vertical-align:0px;margin-right:5px"><path d="M0.6 4.5C2 2 3.8 0.7 6 0.7C8.2 0.7 10 2 11.4 4.5C10 7 8.2 8.3 6 8.3C3.8 8.3 2 7 0.6 4.5Z"/><circle cx="6" cy="4.5" r="1.9"/></svg>详情查看</div>
<div class="cb" style="left:10px;top:315px"></div>
<div class="td" style="left:59px;top:305px">10</div>
<div class="td" style="left:109px;top:305px">1000137939</div>
<div class="td" style="left:272px;top:305px">移动铁塔</div>
<div class="td" style="left:435px;top:305px">移动铁塔-配电房</div>
<div class="td" style="left:599px;top:305px">2024-11-19 00:00:00</div>
<div class="td" style="left:763px;top:305px">240.96</div>
<div class="td" style="left:927px;top:305px">-50910.51</div>
<div class="td" style="left:1091px;top:305px">-51151.47</div>
<div class="td lk" style="left:1287px;top:305px"><svg width="12" height="9" viewBox="0 0 12 9" fill="none" stroke="#1890ff" stroke-width="1" style="vertical-align:0px;margin-right:5px"><path d="M0.6 4.5C2 2 3.8 0.7 6 0.7C8.2 0.7 10 2 11.4 4.5C10 7 8.2 8.3 6 8.3C3.8 8.3 2 7 0.6 4.5Z"/><circle cx="6" cy="4.5" r="1.9"/></svg>详情查看</div>
<div class="cb" style="left:10px;top:345px"></div>
<div class="td" style="left:59px;top:335px">11</div>
<div class="td" style="left:109px;top:335px">1000137938</div>
<div class="td" style="left:272px;top:335px">北斗导航</div>
<div class="td" style="left:435px;top:335px">北斗导航-配电房</div>
<div class="td" style="left:599px;top:335px">2024-11-19 00:00:00</div>
<div class="td" style="left:763px;top:335px">19.86</div>
<div class="td" style="left:927px;top:335px">1674.25</div>
<div class="td" style="left:1091px;top:335px">1654.39</div>
<div class="td lk" style="left:1287px;top:335px"><svg width="12" height="9" viewBox="0 0 12 9" fill="none" stroke="#1890ff" stroke-width="1" style="vertical-align:0px;margin-right:5px"><path d="M0.6 4.5C2 2 3.8 0.7 6 0.7C8.2 0.7 10 2 11.4 4.5C10 7 8.2 8.3 6 8.3C3.8 8.3 2 7 0.6 4.5Z"/><circle cx="6" cy="4.5" r="1.9"/></svg>详情查看</div>
</div>
<!-- pagination -->
<div class="a pg" style="left:1521px;top:908px">共 11 条</div>
<div class="inp" style="left:1583px;top:904px;width:100px;height:28px;border-radius:3px"></div>
<div class="a pg" style="left:1599px;top:908px">500条/页</div>
<svg class="ic" style="left:1667px;top:915px" width="8" height="5" viewBox="0 0 8 5" fill="none" stroke="#c0c4cc" stroke-width="1"><path d="M0.4 0.4L4 4.2L7.6 0.4"/></svg>
<div class="a" style="left:1703px;top:904px;width:30px;height:28px;background:#f4f4f5;border-radius:2px"></div>
<svg class="ic" style="left:1714px;top:913px" width="6" height="10" viewBox="0 0 6 10" fill="none" stroke="#c0c4cc" stroke-width="1.2"><path d="M5 0.5L0.8 5L5 9.5"/></svg>
<div class="a" style="left:1743px;top:904px;width:30px;height:28px;background:#f4f4f5;border-radius:2px"></div>
<svg class="ic" style="left:1754px;top:913px" width="6" height="10" viewBox="0 0 6 10" fill="none" stroke="#c0c4cc" stroke-width="1.2"><path d="M1 0.5L5.2 5L1 9.5"/></svg>
<div class="a pg" style="left:1802px;top:908px">前往</div>
<div class="inp" style="left:1832px;top:904px;width:46px;height:28px;border-radius:3px"></div>
<div class="a pg" style="left:1851px;top:908px">1</div>
<div class="a pg" style="left:1882px;top:908px">页</div>
<!-- right edge shade -->
<div class="a" style="left:1903px;top:0;width:17px;height:953px;background:linear-gradient(to right,rgba(0,0,0,0),rgba(0,0,0,.025));z-index:10"></div>
</div>

</body></html>
